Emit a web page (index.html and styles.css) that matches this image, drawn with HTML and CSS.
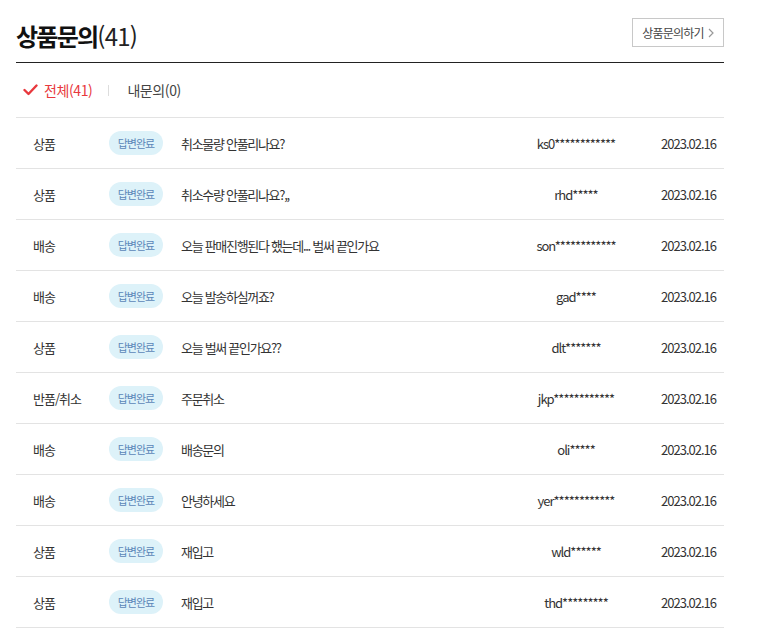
FILE: index.html
```
<!DOCTYPE html>
<html lang="ko">
<head>
<meta charset="utf-8">
<link rel="stylesheet" href="styles.css">
</head>
<body>
<div class="wrap">
  <div class="head">
    <h2 class="title">상품문의<span class="cnt">(41)</span></h2>
    <a class="write-btn">상품문의하기<svg class="chev" width="6" height="10" viewBox="0 0 6 10"><path d="M1 1l4 4-4 4" fill="none" stroke="#999" stroke-width="1.2"/></svg></a>
  </div>
  <div class="tabs">
    <span class="tab on"><svg class="check" width="15" height="12" viewBox="0 0 15 12"><path d="M1.5 6l4 4 8-8.5" fill="none" stroke="#e8383d" stroke-width="2.4" stroke-linecap="round" stroke-linejoin="round"/></svg>전체(41)</span>
    <span class="sep"></span>
    <span class="tab">내문의(0)</span>
  </div>
  <ul class="list">
    <li class="row"><span class="cat">상품</span><span class="badge">답변완료</span><span class="subj">취소물량 안풀리나요?</span><span class="user">ks0************</span><span class="date">2023.02.16</span></li>
    <li class="row"><span class="cat">상품</span><span class="badge">답변완료</span><span class="subj">취소수량 안풀리나요?,,</span><span class="user">rhd*****</span><span class="date">2023.02.16</span></li>
    <li class="row"><span class="cat">배송</span><span class="badge">답변완료</span><span class="subj">오늘 판매진행된다 했는데... 벌써 끝인가요</span><span class="user">son************</span><span class="date">2023.02.16</span></li>
    <li class="row"><span class="cat">배송</span><span class="badge">답변완료</span><span class="subj">오늘 발송하실꺼죠?</span><span class="user">gad****</span><span class="date">2023.02.16</span></li>
    <li class="row"><span class="cat">상품</span><span class="badge">답변완료</span><span class="subj">오늘 벌써 끝인가요??</span><span class="user">dlt*******</span><span class="date">2023.02.16</span></li>
    <li class="row"><span class="cat">반품/취소</span><span class="badge">답변완료</span><span class="subj">주문취소</span><span class="user">jkp************</span><span class="date">2023.02.16</span></li>
    <li class="row"><span class="cat">배송</span><span class="badge">답변완료</span><span class="subj">배송문의</span><span class="user">oli*****</span><span class="date">2023.02.16</span></li>
    <li class="row"><span class="cat">배송</span><span class="badge">답변완료</span><span class="subj">안녕하세요</span><span class="user">yer************</span><span class="date">2023.02.16</span></li>
    <li class="row"><span class="cat">상품</span><span class="badge">답변완료</span><span class="subj">재입고</span><span class="user">wld******</span><span class="date">2023.02.16</span></li>
    <li class="row"><span class="cat">상품</span><span class="badge">답변완료</span><span class="subj">재입고</span><span class="user">thd*********</span><span class="date">2023.02.16</span></li>
  </ul>
</div>
</body>
</html>
```
FILE: styles.css
```
* { box-sizing: border-box; }
body {
  margin: 0;
  background: #fff;
  font-family: "Noto Sans CJK KR", "Noto Sans", sans-serif;
  color: #333;
}
.wrap {
  width: 708px;
  margin-left: 16px;
}
.head {
  height: 63px;
  border-bottom: 1px solid #222;
  display: flex;
  align-items: center;
  justify-content: space-between;
  padding-bottom: 1px;
}
.title {
  margin: 0;
  font-size: 24px;
  font-weight: 700;
  letter-spacing: -1.75px;
  color: #111;
  line-height: 1;
  margin-top: 10px;
}
.title .cnt {
  font-weight: 400;
  color: #222;
  letter-spacing: -0.75px;
}
.write-btn {
  display: flex;
  align-items: center;
  height: 29px;
  width: 92px;
  justify-content: center;
  border: 1px solid #c8c8c8;
  font-size: 12px;
  letter-spacing: -0.8px;
  color: #444;
  margin-top: 4px;
  gap: 4px;
}
.chev { display: block; }
.tabs {
  height: 55px;
  display: flex;
  align-items: center;
  padding-left: 7px;
  font-size: 14px;
  letter-spacing: -0.4px;
  color: #444;
  border-bottom: 1px solid #e3e3e3;
}
.tab { display: flex; align-items: center; }
.tab.on { color: #e8383d; }
.check { margin-right: 6px; }
.sep {
  width: 1px;
  height: 11px;
  background: #ddd;
  margin: 0 18px 0 16px;
}
.list {
  list-style: none;
  margin: 0;
  padding: 0;
}
.row {
  height: 51px;
  border-bottom: 1px solid #e3e3e3;
  display: grid;
  grid-template-columns: 76px 72px 1fr 120px 80px;
  align-items: center;
  padding: 0 8px 0 17px;
  font-size: 13px;
  letter-spacing: -1px;
  color: #333;
}
.subj { letter-spacing: -1.3px; }
.badge {
  width: 54px;
  height: 24px;
  border-radius: 12px;
  background: #ddf2f9;
  color: #5b87b8;
  font-size: 11px;
  display: flex;
  align-items: center;
  justify-content: center;
}
.user { text-align: center; }
.date { text-align: right; }
```
